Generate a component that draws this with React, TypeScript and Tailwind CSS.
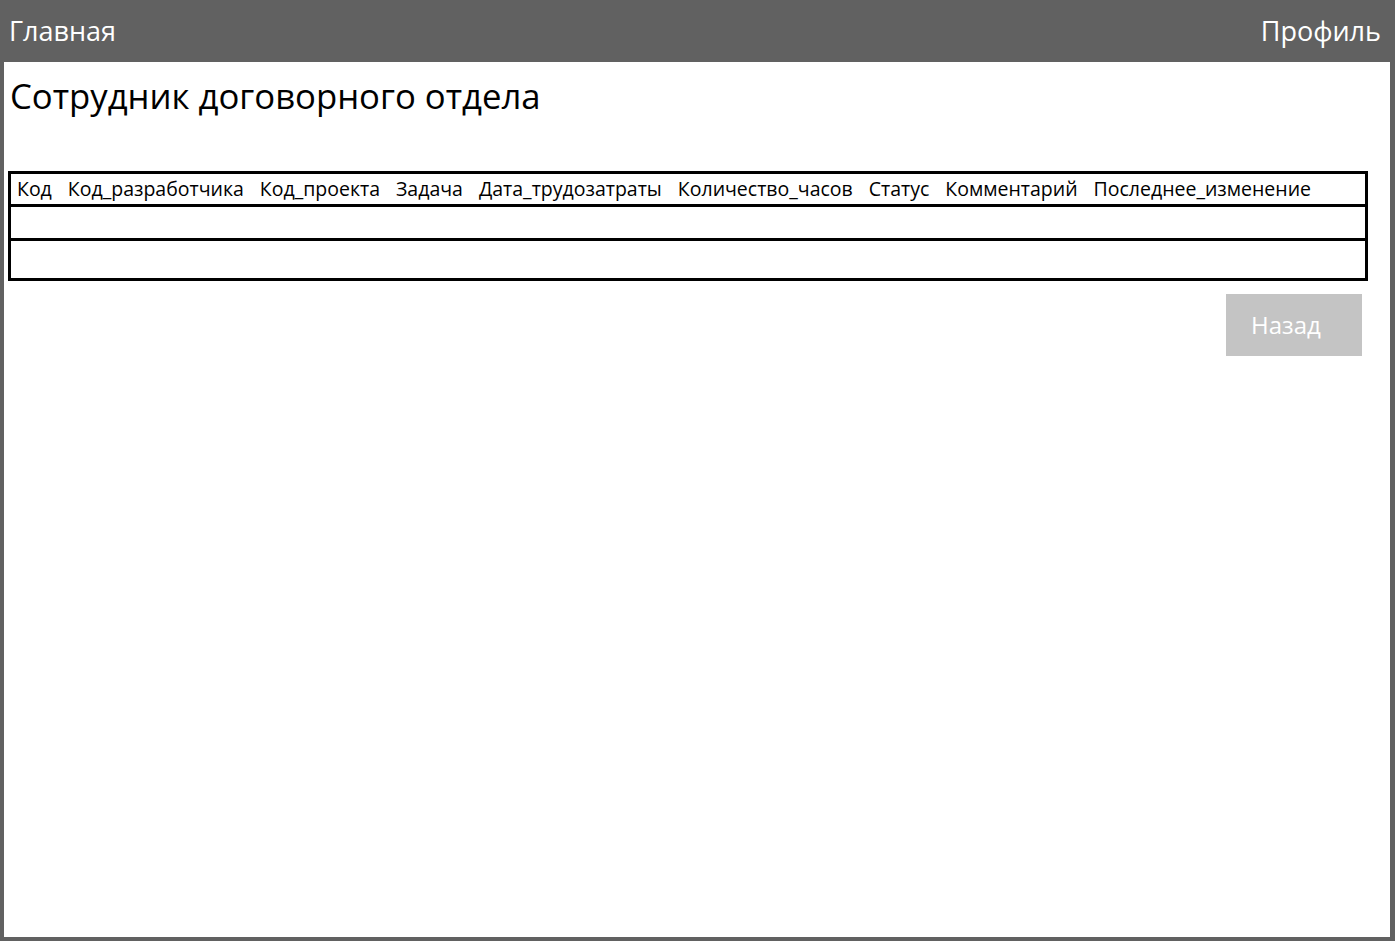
const columns = [
  'Код',
  'Код_разработчика',
  'Код_проекта',
  'Задача',
  'Дата_трудозатраты',
  'Количество_часов',
  'Статус',
  'Комментарий',
  'Последнее_изменение',
];

function App() {
  return (
    <div className="min-h-screen bg-[#616161] flex flex-col font-['Open_Sans',sans-serif]">
      <header className="h-[62px] flex items-center justify-between pl-[9px] pr-[14px] text-white text-[27px]">
        <span>Главная</span>
        <span>Профиль</span>
      </header>
      <main className="flex-1 bg-white ml-[4px] mr-[5px] mb-[4px] h-[875px] pt-[13px] px-[4px]">
        <h1 className="text-[34.7px] leading-[42px] pl-[2px] text-black">Сотрудник договорного отдела</h1>
        <table className="mt-[54px] w-[1360px] border-collapse border-[3px] border-black text-[19.5px] text-black">
          <thead>
            <tr className="h-[33px] border-b-[3px] border-black">
              {columns.map((c) => (
                <th key={c} className="font-normal text-left px-[8px] first:pl-[6px] whitespace-nowrap last:w-full">
                  {c}
                </th>
              ))}
            </tr>
          </thead>
          <tbody>
            <tr className="h-[34px] border-b-[3px] border-black">
              <td colSpan={columns.length}></td>
            </tr>
            <tr className="h-[40px]">
              <td colSpan={columns.length}></td>
            </tr>
          </tbody>
        </table>
        <div className="flex justify-end pr-[24px] mt-[13px]">
          <button className="w-[136px] h-[62px] bg-[#c4c4c4] text-white text-[24px] text-left pl-[25px]">Назад</button>
        </div>
      </main>
    </div>
  );
}

export default App;
